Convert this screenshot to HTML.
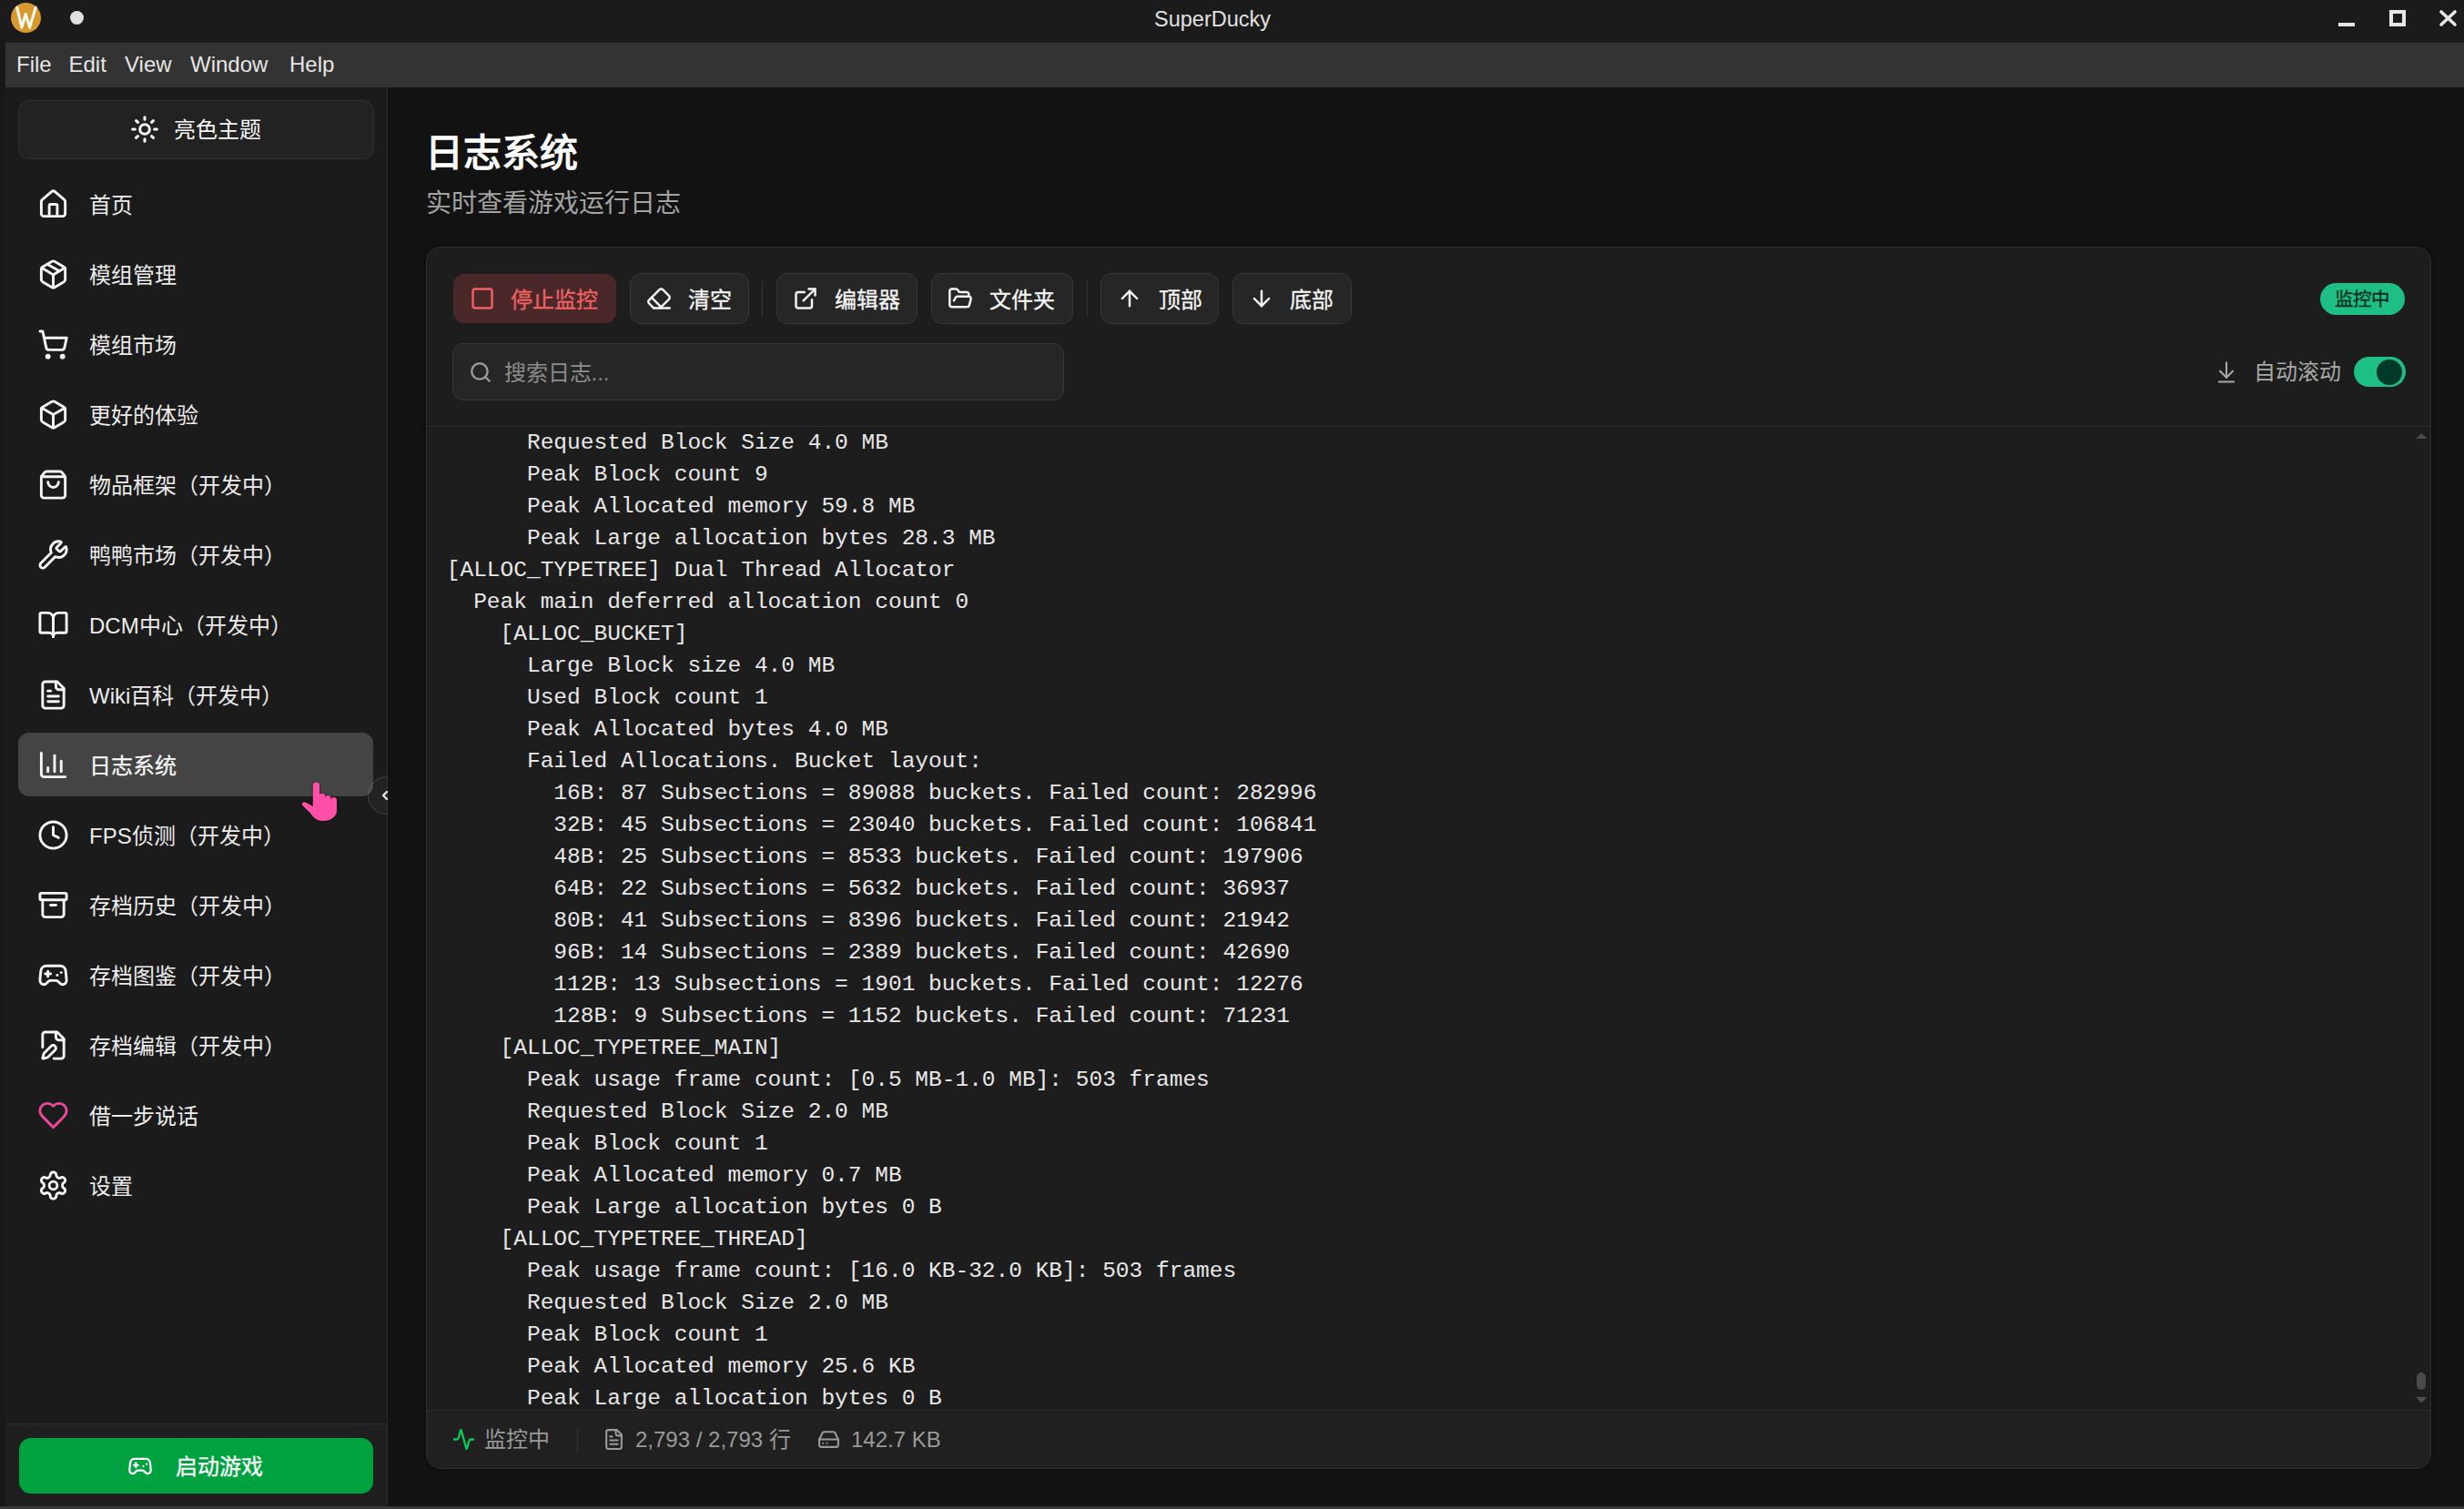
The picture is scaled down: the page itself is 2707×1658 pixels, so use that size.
<!DOCTYPE html>
<html lang="zh-CN">
<head>
<meta charset="utf-8">
<title>SuperDucky</title>
<style>
*{box-sizing:border-box;margin:0;padding:0}
html,body{width:2707px;height:1658px;overflow:hidden;background:#333333}
body{position:relative;font-family:"Liberation Sans",sans-serif;color:#e8e8e8}
.abs{position:absolute}
svg{position:absolute;overflow:visible}
.ic{fill:none;stroke:currentColor;stroke-linecap:round;stroke-linejoin:round}
.tx{position:absolute;white-space:nowrap}
</style>
</head>
<body>

<div class="abs" style="left:0;top:0;width:2707px;height:47px;background:#1b1b1b"></div>
<div class="abs" style="left:6px;top:47px;width:2701px;height:49px;background:#333333"></div>
<div class="abs" style="left:0;top:47px;width:6px;height:1611px;background:#181818"></div>
<div class="abs" style="left:6px;top:96px;width:420px;height:1559px;background:#1b1b1b;border-right:1px solid #2b2b2b"></div>
<div class="abs" style="left:426px;top:96px;width:2281px;height:1559px;background:#121212"></div>
<div class="abs" style="left:0;top:1655px;width:2707px;height:3px;background:#383838"></div>
<div class="abs" style="left:12px;top:3px;width:33px;height:33px;border-radius:50%;background:#d89a2e"></div>
<svg style="left:0;top:0;width:50px;height:40px" viewBox="0 0 50 40"><path d="M18.6 8.2 L23.9 30.2 L28.2 15.5 L32.6 30.2 L39.2 8.2" fill="none" stroke="#fffaf0" stroke-width="3" stroke-linejoin="round" stroke-linecap="round"/></svg>
<div class="abs" style="left:77px;top:12px;width:15px;height:15px;border-radius:50%;background:#e0e0e0"></div>
<div class="tx" style="left:1268px;top:5.5px;font-size:23.5px;line-height:30px;color:#e2e2e2">SuperDucky</div>
<div class="abs" style="left:2569px;top:24.5px;width:18px;height:4px;background:#e6e6e6"></div>
<div class="abs" style="left:2625px;top:11px;width:18px;height:18px;border:4px solid #e6e6e6"></div>
<svg style="left:2680px;top:11px;width:19px;height:18px" viewBox="0 0 19 18"><path d="M2 2L17 16M17 2L2 16" stroke="#e6e6e6" stroke-width="3.6" stroke-linecap="round"/></svg>
<div class="tx" style="left:18px;top:56px;font-size:24px;line-height:30px;color:#e6e6e6">File</div>
<div class="tx" style="left:75.5px;top:56px;font-size:24px;line-height:30px;color:#e6e6e6">Edit</div>
<div class="tx" style="left:137px;top:56px;font-size:24px;line-height:30px;color:#e6e6e6">View</div>
<div class="tx" style="left:209px;top:56px;font-size:24px;line-height:30px;color:#e6e6e6">Window</div>
<div class="tx" style="left:318px;top:56px;font-size:24px;line-height:30px;color:#e6e6e6">Help</div>
<div class="abs" style="left:20px;top:110px;width:391px;height:65px;background:#222222;border:1px solid #303030;border-radius:12px"></div>
<svg class="ic" style="left:143px;top:126px;width:32px;height:32px;color:#f5f5f5" viewBox="0 0 24 24" stroke-width="2.3"><circle cx="12" cy="12" r="4"/><path d="M12 2v2"/><path d="M12 20v2"/><path d="m4.93 4.93 1.41 1.41"/><path d="m17.66 17.66 1.41 1.41"/><path d="M2 12h2"/><path d="M20 12h2"/><path d="m6.34 17.66-1.41 1.41"/><path d="m19.07 4.93-1.41 1.41"/></svg>
<div class="tx" style="left:191px;top:126px;font-size:24px;line-height:34px;color:#f5f5f5">亮色主题</div>
<svg class="ic" style="left:41px;top:206.5px;width:35px;height:35px;color:#f5f5f5" viewBox="0 0 24 24" stroke-width="2"><path d="M15 21v-8a1 1 0 0 0-1-1h-4a1 1 0 0 0-1 1v8"/><path d="M3 10a2 2 0 0 1 .709-1.528l7-5.999a2 2 0 0 1 2.582 0l7 5.999A2 2 0 0 1 21 10v9a2 2 0 0 1-2 2H5a2 2 0 0 1-2-2z"/></svg>
<div class="tx" style="left:98px;top:208.5px;font-size:24px;line-height:34px;color:#ececec">首页</div>
<svg class="ic" style="left:41px;top:283.5px;width:35px;height:35px;color:#f5f5f5" viewBox="0 0 24 24" stroke-width="2"><path d="M11 21.73a2 2 0 0 0 2 0l7-4A2 2 0 0 0 21 16V8a2 2 0 0 0-1-1.73l-7-4a2 2 0 0 0-2 0l-7 4A2 2 0 0 0 3 8v8a2 2 0 0 0 1 1.73z"/><path d="M12 22V12"/><path d="m3.3 7 7.703 4.734a2 2 0 0 0 1.994 0L20.7 7"/><path d="m7.5 4.27 9 5.15"/></svg>
<div class="tx" style="left:98px;top:285.5px;font-size:24px;line-height:34px;color:#ececec">模组管理</div>
<svg class="ic" style="left:41px;top:360.5px;width:35px;height:35px;color:#f5f5f5" viewBox="0 0 24 24" stroke-width="2"><circle cx="8" cy="21" r="1"/><circle cx="19" cy="21" r="1"/><path d="M2.05 2.05h2l2.66 12.42a2 2 0 0 0 2 1.58h9.78a2 2 0 0 0 1.95-1.57l1.65-7.43H5.12"/></svg>
<div class="tx" style="left:98px;top:362.5px;font-size:24px;line-height:34px;color:#ececec">模组市场</div>
<svg class="ic" style="left:41px;top:437.5px;width:35px;height:35px;color:#f5f5f5" viewBox="0 0 24 24" stroke-width="2"><path d="M21 8a2 2 0 0 0-1-1.73l-7-4a2 2 0 0 0-2 0l-7 4A2 2 0 0 0 3 8v8a2 2 0 0 0 1 1.73l7 4a2 2 0 0 0 2 0l7-4A2 2 0 0 0 21 16Z"/><path d="m3.3 7 8.7 5 8.7-5"/><path d="M12 22V12"/></svg>
<div class="tx" style="left:98px;top:439.5px;font-size:24px;line-height:34px;color:#ececec">更好的体验</div>
<svg class="ic" style="left:41px;top:514.5px;width:35px;height:35px;color:#f5f5f5" viewBox="0 0 24 24" stroke-width="2"><path d="M16 10a4 4 0 0 1-8 0"/><path d="M3.103 6.034h17.794"/><path d="M3.4 5.467a2 2 0 0 0-.4 1.2V20a2 2 0 0 0 2 2h14a2 2 0 0 0 2-2V6.667a2 2 0 0 0-.4-1.2l-2-2.667A2 2 0 0 0 17 2H7a2 2 0 0 0-1.6.8z"/></svg>
<div class="tx" style="left:98px;top:516.5px;font-size:24px;line-height:34px;color:#ececec">物品框架（开发中）</div>
<svg class="ic" style="left:41px;top:591.5px;width:35px;height:35px;color:#f5f5f5" viewBox="0 0 24 24" stroke-width="2"><path d="M14.7 6.3a1 1 0 0 0 0 1.4l1.6 1.6a1 1 0 0 0 1.4 0l3.106-3.105c.32-.322.863-.22.983.218a6 6 0 0 1-8.259 7.057l-7.91 7.91a1 1 0 0 1-2.999-3l7.91-7.91a6 6 0 0 1 7.057-8.259c.438.12.54.662.219.984z"/></svg>
<div class="tx" style="left:98px;top:593.5px;font-size:24px;line-height:34px;color:#ececec">鸭鸭市场（开发中）</div>
<svg class="ic" style="left:41px;top:668.5px;width:35px;height:35px;color:#f5f5f5" viewBox="0 0 24 24" stroke-width="2"><path d="M12 7v14"/><path d="M3 18a1 1 0 0 1-1-1V4a1 1 0 0 1 1-1h5a4 4 0 0 1 4 4 4 4 0 0 1 4-4h5a1 1 0 0 1 1 1v13a1 1 0 0 1-1 1h-6a3 3 0 0 0-3 3 3 3 0 0 0-3-3z"/></svg>
<div class="tx" style="left:98px;top:670.5px;font-size:24px;line-height:34px;color:#ececec">DCM中心（开发中）</div>
<svg class="ic" style="left:41px;top:745.5px;width:35px;height:35px;color:#f5f5f5" viewBox="0 0 24 24" stroke-width="2"><path d="M15 2H6a2 2 0 0 0-2 2v16a2 2 0 0 0 2 2h12a2 2 0 0 0 2-2V7Z"/><path d="M14 2v4a2 2 0 0 0 2 2h4"/><path d="M10 9H8"/><path d="M16 13H8"/><path d="M16 17H8"/></svg>
<div class="tx" style="left:98px;top:747.5px;font-size:24px;line-height:34px;color:#ececec">Wiki百科（开发中）</div>
<div class="abs" style="left:20px;top:805px;width:390px;height:70px;background:#444444;border-radius:12px"></div>
<svg class="ic" style="left:41px;top:822.5px;width:35px;height:35px;color:#f5f5f5" viewBox="0 0 24 24" stroke-width="2"><path d="M3 3v16a2 2 0 0 0 2 2h16"/><path d="M18 17V9"/><path d="M13 17V5"/><path d="M8 17v-3"/></svg>
<div class="tx" style="left:98px;top:824.5px;font-size:24px;line-height:34px;color:#ececec;color:#f8f8f8;-webkit-text-stroke:0.25px #f8f8f8">日志系统</div>
<svg class="ic" style="left:41px;top:899.5px;width:35px;height:35px;color:#f5f5f5" viewBox="0 0 24 24" stroke-width="2"><circle cx="12" cy="12" r="10"/><polyline points="12 6 12 12 16 14"/></svg>
<div class="tx" style="left:98px;top:901.5px;font-size:24px;line-height:34px;color:#ececec">FPS侦测（开发中）</div>
<svg class="ic" style="left:41px;top:976.5px;width:35px;height:35px;color:#f5f5f5" viewBox="0 0 24 24" stroke-width="2"><rect width="20" height="5" x="2" y="3" rx="1"/><path d="M4 8v11a2 2 0 0 0 2 2h12a2 2 0 0 0 2-2V8"/><path d="M10 12h4"/></svg>
<div class="tx" style="left:98px;top:978.5px;font-size:24px;line-height:34px;color:#ececec">存档历史（开发中）</div>
<svg class="ic" style="left:41px;top:1053.5px;width:35px;height:35px;color:#f5f5f5" viewBox="0 0 24 24" stroke-width="2"><line x1="6" x2="10" y1="11" y2="11"/><line x1="8" x2="8" y1="9" y2="13"/><line x1="15" x2="15.01" y1="12" y2="12"/><line x1="18" x2="18.01" y1="10" y2="10"/><path d="M17.32 5H6.68a4 4 0 0 0-3.978 3.59c-.006.052-.01.101-.017.152C2.604 9.416 2 14.456 2 16a3 3 0 0 0 3 3c1 0 1.5-.5 2-1l1.414-1.414A2 2 0 0 1 9.828 16h4.344a2 2 0 0 1 1.414.586L17 18c.5.5 1 1 2 1a3 3 0 0 0 3-3c0-1.545-.604-6.584-.685-7.258-.007-.05-.011-.1-.017-.151A4 4 0 0 0 17.32 5z"/></svg>
<div class="tx" style="left:98px;top:1055.5px;font-size:24px;line-height:34px;color:#ececec">存档图鉴（开发中）</div>
<svg class="ic" style="left:41px;top:1130.5px;width:35px;height:35px;color:#f5f5f5" viewBox="0 0 24 24" stroke-width="2"><path d="M12.5 22H18a2 2 0 0 0 2-2V7l-5-5H6a2 2 0 0 0-2 2v9.5"/><path d="M14 2v4a2 2 0 0 0 2 2h4"/><path d="M13.378 15.626a1 1 0 1 0-3.004-3.004l-5.01 5.012a2 2 0 0 0-.506.854l-.837 2.87a.5.5 0 0 0 .62.62l2.87-.837a2 2 0 0 0 .854-.506z"/></svg>
<div class="tx" style="left:98px;top:1132.5px;font-size:24px;line-height:34px;color:#ececec">存档编辑（开发中）</div>
<svg class="ic" style="left:41px;top:1207.5px;width:35px;height:35px;color:#ec4899" viewBox="0 0 24 24" stroke-width="2"><path d="M19 14c1.49-1.46 3-3.21 3-5.5A5.5 5.5 0 0 0 16.5 3c-1.76 0-3 .5-4.5 2-1.5-1.5-2.74-2-4.5-2A5.5 5.5 0 0 0 2 8.5c0 2.3 1.5 4.05 3 5.5l7 7Z"/></svg>
<div class="tx" style="left:98px;top:1209.5px;font-size:24px;line-height:34px;color:#ececec">借一步说话</div>
<svg class="ic" style="left:41px;top:1284.5px;width:35px;height:35px;color:#f5f5f5" viewBox="0 0 24 24" stroke-width="2"><path d="M12.22 2h-.44a2 2 0 0 0-2 2v.18a2 2 0 0 1-1 1.73l-.43.25a2 2 0 0 1-2 0l-.15-.08a2 2 0 0 0-2.73.73l-.22.38a2 2 0 0 0 .73 2.73l.15.1a2 2 0 0 1 1 1.72v.51a2 2 0 0 1-1 1.74l-.15.09a2 2 0 0 0-.73 2.73l.22.38a2 2 0 0 0 2.73.73l.15-.08a2 2 0 0 1 2 0l.43.25a2 2 0 0 1 1 1.73V20a2 2 0 0 0 2 2h.44a2 2 0 0 0 2-2v-.18a2 2 0 0 1 1-1.73l.43-.25a2 2 0 0 1 2 0l.15.08a2 2 0 0 0 2.73-.73l.22-.39a2 2 0 0 0-.73-2.73l-.15-.08a2 2 0 0 1-1-1.74v-.5a2 2 0 0 1 1-1.74l.15-.09a2 2 0 0 0 .73-2.73l-.22-.38a2 2 0 0 0-2.73-.73l-.15.08a2 2 0 0 1-2 0l-.43-.25a2 2 0 0 1-1-1.73V4a2 2 0 0 0-2-2z"/><circle cx="12" cy="12" r="3"/></svg>
<div class="tx" style="left:98px;top:1286.5px;font-size:24px;line-height:34px;color:#ececec">设置</div>
<div class="abs" style="left:404px;top:853px;width:42px;height:42px;border-radius:50%;background:rgba(255,255,255,0.03);border:1px solid rgba(255,255,255,0.13);clip-path:inset(0 calc(100% - 21.5px) 0 0)"></div>
<svg style="left:418px;top:868px;width:10px;height:12px" viewBox="0 0 10 12"><path d="M7 2L3 6L7 10" fill="none" stroke="#e6e6e6" stroke-width="2.4" stroke-linecap="round" stroke-linejoin="round"/></svg>
<div class="abs" style="left:6px;top:1564px;width:419px;height:91px;background:#1f1f1f;border-top:1px solid #2d2d2d"></div>
<div class="abs" style="left:21px;top:1580px;width:389px;height:61px;background:#00a23f;border-radius:13px"></div>
<svg class="ic" style="left:140px;top:1597px;width:28px;height:28px;color:#ffffff" viewBox="0 0 24 24" stroke-width="1.95"><line x1="6" x2="10" y1="11" y2="11"/><line x1="8" x2="8" y1="9" y2="13"/><line x1="15" x2="15.01" y1="12" y2="12"/><line x1="18" x2="18.01" y1="10" y2="10"/><path d="M17.32 5H6.68a4 4 0 0 0-3.978 3.59c-.006.052-.01.101-.017.152C2.604 9.416 2 14.456 2 16a3 3 0 0 0 3 3c1 0 1.5-.5 2-1l1.414-1.414A2 2 0 0 1 9.828 16h4.344a2 2 0 0 1 1.414.586L17 18c.5.5 1 1 2 1a3 3 0 0 0 3-3c0-1.545-.604-6.584-.685-7.258-.007-.05-.011-.1-.017-.151A4 4 0 0 0 17.32 5z"/></svg>
<div class="tx" style="left:193px;top:1595px;font-size:24px;line-height:34px;color:#ffffff;-webkit-text-stroke:0.3px #fff">启动游戏</div>
<div class="tx" style="left:467px;top:141px;font-size:42px;line-height:56px;color:#ffffff;font-weight:bold">日志系统</div>
<div class="tx" style="left:467.5px;top:206px;font-size:28px;line-height:36px;color:#a3a3a3">实时查看游戏运行日志</div>
<div class="abs" style="left:468px;top:271px;width:2203px;height:1343px;background:#1d1d1d;border:1px solid #2e2e2e;border-radius:16px;overflow:hidden;box-shadow:0 0 4px 1px rgba(0,0,0,0.35)"><div class="abs" style="left:0;top:196px;width:2201px;height:1px;background:#2e2e2e"></div><div class="abs" style="left:0;top:1277px;width:2201px;height:64px;background:#202020;border-top:1px solid #2e2e2e"></div></div>
<div class="abs" style="left:498px;top:301px;width:179px;height:54px;background:#4a282a;border-radius:12px"></div>
<svg class="ic" style="left:515.75px;top:314px;width:28px;height:28px;color:#f06262" viewBox="0 0 24 24" stroke-width="2.1"><rect width="18" height="18" x="3" y="3" rx="2"/></svg>
<div class="tx" style="left:561px;top:313px;font-size:24px;line-height:34px;color:#f06262;-webkit-text-stroke:0.3px #f06262">停止监控</div>
<div class="abs" style="left:692px;top:300px;width:131px;height:56px;background:#262626;border:1px solid #383838;border-radius:12px"></div>
<svg class="ic" style="left:709.75px;top:314px;width:28px;height:28px;color:#f5f5f5" viewBox="0 0 24 24" stroke-width="2.1"><path d="m7 21-4.3-4.3c-1-1-1-2.5 0-3.4l9.6-9.6c1-1 2.5-1 3.4 0l5.6 5.6c1 1 1 2.5 0 3.4L13 21"/><path d="M22 21H7"/><path d="m5 11 9 9"/></svg>
<div class="tx" style="left:756px;top:313px;font-size:24px;line-height:34px;color:#f5f5f5;-webkit-text-stroke:0.3px #f5f5f5">清空</div>
<div class="abs" style="left:837px;top:308px;width:1px;height:40px;background:#333"></div>
<div class="abs" style="left:853px;top:300px;width:155px;height:56px;background:#262626;border:1px solid #383838;border-radius:12px"></div>
<svg class="ic" style="left:870.65px;top:314px;width:28px;height:28px;color:#f5f5f5" viewBox="0 0 24 24" stroke-width="2.1"><path d="M15 3h6v6"/><path d="M10 14 21 3"/><path d="M18 13v6a2 2 0 0 1-2 2H5a2 2 0 0 1-2-2V8a2 2 0 0 1 2-2h6"/></svg>
<div class="tx" style="left:917px;top:313px;font-size:24px;line-height:34px;color:#f5f5f5;-webkit-text-stroke:0.3px #f5f5f5">编辑器</div>
<div class="abs" style="left:1023px;top:300px;width:156px;height:56px;background:#262626;border:1px solid #383838;border-radius:12px"></div>
<svg class="ic" style="left:1040.5px;top:314px;width:28px;height:28px;color:#f5f5f5" viewBox="0 0 24 24" stroke-width="2.1"><path d="m6 14 1.5-2.9A2 2 0 0 1 9.24 10H20a2 2 0 0 1 1.94 2.5l-1.54 6a2 2 0 0 1-1.95 1.5H4a2 2 0 0 1-2-2V5a2 2 0 0 1 2-2h3.9a2 2 0 0 1 1.69.9l.81 1.2a2 2 0 0 0 1.67.9H18a2 2 0 0 1 2 2v2"/></svg>
<div class="tx" style="left:1087px;top:313px;font-size:24px;line-height:34px;color:#f5f5f5;-webkit-text-stroke:0.3px #f5f5f5">文件夹</div>
<div class="abs" style="left:1194px;top:308px;width:1px;height:40px;background:#333"></div>
<div class="abs" style="left:1209px;top:300px;width:130px;height:56px;background:#262626;border:1px solid #383838;border-radius:12px"></div>
<svg class="ic" style="left:1226.6px;top:314px;width:28px;height:28px;color:#f5f5f5" viewBox="0 0 24 24" stroke-width="2.1"><path d="m5 12 7-7 7 7"/><path d="M12 19V5"/></svg>
<div class="tx" style="left:1273px;top:313px;font-size:24px;line-height:34px;color:#f5f5f5;-webkit-text-stroke:0.3px #f5f5f5">顶部</div>
<div class="abs" style="left:1354px;top:300px;width:131px;height:56px;background:#262626;border:1px solid #383838;border-radius:12px"></div>
<svg class="ic" style="left:1372.35px;top:314px;width:28px;height:28px;color:#f5f5f5" viewBox="0 0 24 24" stroke-width="2.1"><path d="M12 5v14"/><path d="m19 12-7 7-7-7"/></svg>
<div class="tx" style="left:1417px;top:313px;font-size:24px;line-height:34px;color:#f5f5f5;-webkit-text-stroke:0.3px #f5f5f5">底部</div>
<div class="abs" style="left:2549px;top:311px;width:93px;height:35px;border-radius:18px;background:#1dbf84"></div>
<div class="tx" style="left:2565px;top:314px;font-size:20.5px;line-height:30px;color:#012e22;-webkit-text-stroke:0.35px #012e22">监控中</div>
<div class="abs" style="left:497px;top:377px;width:672px;height:63px;background:#262626;border:1px solid #383838;border-radius:12px"></div>
<svg class="ic" style="left:515px;top:396px;width:26px;height:26px;color:#9a9a9a" viewBox="0 0 24 24" stroke-width="2.2"><circle cx="11" cy="11" r="8"/><path d="m21 21-4.3-4.3"/></svg>
<div class="tx" style="left:553.5px;top:392.5px;font-size:24px;line-height:34px;color:#8c8c8c">搜索日志...</div>
<svg class="ic" style="left:2432px;top:395px;width:28px;height:28px;color:#a8a8a8" viewBox="0 0 24 24" stroke-width="1.8"><path d="M12 17V3"/><path d="m6 11 6 6 6-6"/><path d="M19 21H5"/></svg>
<div class="tx" style="left:2475.5px;top:392px;font-size:24px;line-height:34px;color:#a8a8a8">自动滚动</div>
<div class="abs" style="left:2586px;top:392px;width:57px;height:33px;border-radius:17px;background:#1dbf84"></div>
<div class="abs" style="left:2611px;top:394.5px;width:28px;height:28px;border-radius:50%;background:#00382a"></div>
<div class="tx" style="left:490.75px;top:469px;font-family:'Liberation Mono',monospace;font-size:24.5px;line-height:35px;color:#e8e8e8;white-space:pre">      Requested Block Size 4.0 MB
      Peak Block count 9
      Peak Allocated memory 59.8 MB
      Peak Large allocation bytes 28.3 MB
[ALLOC_TYPETREE] Dual Thread Allocator
  Peak main deferred allocation count 0
    [ALLOC_BUCKET]
      Large Block size 4.0 MB
      Used Block count 1
      Peak Allocated bytes 4.0 MB
      Failed Allocations. Bucket layout:
        16B: 87 Subsections = 89088 buckets. Failed count: 282996
        32B: 45 Subsections = 23040 buckets. Failed count: 106841
        48B: 25 Subsections = 8533 buckets. Failed count: 197906
        64B: 22 Subsections = 5632 buckets. Failed count: 36937
        80B: 41 Subsections = 8396 buckets. Failed count: 21942
        96B: 14 Subsections = 2389 buckets. Failed count: 42690
        112B: 13 Subsections = 1901 buckets. Failed count: 12276
        128B: 9 Subsections = 1152 buckets. Failed count: 71231
    [ALLOC_TYPETREE_MAIN]
      Peak usage frame count: [0.5 MB-1.0 MB]: 503 frames
      Requested Block Size 2.0 MB
      Peak Block count 1
      Peak Allocated memory 0.7 MB
      Peak Large allocation bytes 0 B
    [ALLOC_TYPETREE_THREAD]
      Peak usage frame count: [16.0 KB-32.0 KB]: 503 frames
      Requested Block Size 2.0 MB
      Peak Block count 1
      Peak Allocated memory 25.6 KB
      Peak Large allocation bytes 0 B</div>
<svg style="left:2654px;top:476px;width:12.5px;height:6px" viewBox="0 0 12.5 6"><path d="M6.25 0L12.5 6H0z" fill="#4a4a4a"/></svg>
<div class="abs" style="left:2655px;top:1508px;width:10px;height:19px;border-radius:5px;background:#4a4a4a"></div>
<svg style="left:2654px;top:1535px;width:12.5px;height:6.5px" viewBox="0 0 12.5 6.5"><path d="M0 0H12.5L6.25 6.5z" fill="#4d4d4d"/></svg>
<svg class="ic" style="left:497px;top:1569px;width:25px;height:25px;color:#0cc957" viewBox="0 0 24 24" stroke-width="2.3"><path d="M22 12h-2.48a2 2 0 0 0-1.93 1.46l-2.35 8.36a.25.25 0 0 1-.48 0L9.24 2.18a.25.25 0 0 0-.48 0l-2.35 8.36A2 2 0 0 1 4.49 12H2"/></svg>
<div class="tx" style="left:532px;top:1565px;font-size:24px;line-height:34px;color:#9a9a9a">监控中</div>
<div class="abs" style="left:634px;top:1568px;width:1px;height:28px;background:#333"></div>
<svg class="ic" style="left:662px;top:1569px;width:25px;height:25px;color:#9a9a9a" viewBox="0 0 24 24" stroke-width="2"><path d="M15 2H6a2 2 0 0 0-2 2v16a2 2 0 0 0 2 2h12a2 2 0 0 0 2-2V7Z"/><path d="M14 2v4a2 2 0 0 0 2 2h4"/><path d="M10 9H8"/><path d="M16 13H8"/><path d="M16 17H8"/></svg>
<div class="tx" style="left:698px;top:1565px;font-size:24px;line-height:34px;color:#9a9a9a">2,793 / 2,793 行</div>
<svg class="ic" style="left:898px;top:1569px;width:25px;height:25px;color:#9a9a9a" viewBox="0 0 24 24" stroke-width="2"><line x1="22" x2="2" y1="12" y2="12"/><path d="M5.45 5.11 2 12v6a2 2 0 0 0 2 2h16a2 2 0 0 0 2-2v-6l-3.45-6.89A2 2 0 0 0 16.76 4H7.24a2 2 0 0 0-1.79 1.11z"/><line x1="6" x2="6.01" y1="16" y2="16"/><line x1="10" x2="10.01" y1="16" y2="16"/></svg>
<div class="tx" style="left:935px;top:1565px;font-size:24px;line-height:34px;color:#9a9a9a">142.7 KB</div>
<svg style="left:320px;top:840px;width:60px;height:70px;filter:drop-shadow(0 0 1.5px rgba(0,0,0,0.6))" viewBox="0 0 60 70"><g fill="#ff4fa8"><rect x="23.8" y="19.6" width="7.2" height="30" rx="3.6"/><rect x="30.6" y="31.8" width="6.6" height="18" rx="3.3"/><rect x="36.9" y="33.9" width="6.6" height="18" rx="3.3"/><rect x="43.2" y="36" width="6.8" height="18" rx="3.4"/><path d="M23.8 42 L50 42 L50 50 C50 57.5 43.5 62 35 62 C28.5 62 24.5 58.5 21 53.5 L12.6 45.2 C10.5 43 12.8 40.6 15.5 41.6 C18.5 42.8 21.5 44.5 23.8 46.5 Z"/></g></svg>
</body></html>
